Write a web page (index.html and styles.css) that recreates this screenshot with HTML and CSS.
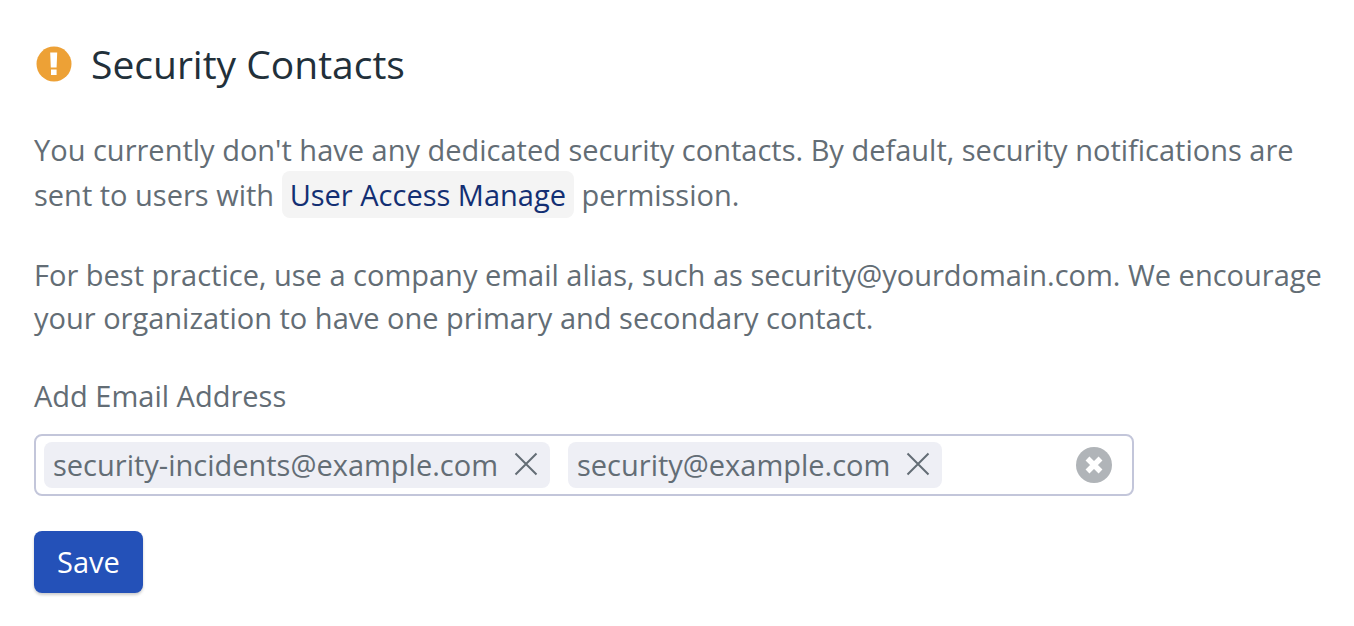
FILE: index.html
```html
<!DOCTYPE html>
<html lang="en">
<head>
<meta charset="utf-8">
<title>Security Contacts</title>
<link rel="stylesheet" href="styles.css">
</head>
<body>
<main class="panel">
  <header class="heading">
    <svg class="warning-icon" viewBox="0 0 36 36" aria-hidden="true">
      <circle cx="18" cy="18" r="17.5" fill="#eda136"/>
      <path d="M14.200 6.500h7l-.6 15h-5.800zM15 23.500h5.600v5.500H15z" fill="#fff"/>
    </svg>
    <h1 class="title">Security Contacts</h1>
  </header>
  <p class="text">You currently don't have any dedicated security contacts. By default, security notifications are sent to users with <span class="permission">User Access Manage</span> permission.</p>
  <p class="text">For best practice, use a company email alias, such as security@yourdomain.com. We encourage your organization to have one primary and secondary contact.</p>
  <form class="form">
    <label class="label" for="email">Add Email Address</label>
    <div class="field">
      <span class="tag">security-incidents@example.com
        <button class="remove" type="button" aria-label="Remove security-incidents@example.com"><svg class="cross" viewBox="0 0 24 24"><path d="M1.500 1.500l21 21M22.500 1.500l-21 21"/></svg></button>
      </span>
      <span class="tag">security@example.com
        <button class="remove" type="button" aria-label="Remove security@example.com"><svg class="cross" viewBox="0 0 24 24"><path d="M1.500 1.500l21 21M22.500 1.500l-21 21"/></svg></button>
      </span>
      <input class="input" id="email" type="email">
      <button class="clear" type="button" aria-label="Clear all"><svg class="clear-icon" viewBox="0 0 36 36"><circle cx="18" cy="18" r="18" fill="#b0b4b8"/><path d="M11.500 11.500l13 13M24.500 11.500l-13 13" stroke="#fff" stroke-width="5.500"/></svg></button>
    </div>
    <button class="save" type="submit">Save</button>
  </form>
</main>
</body>
</html>
```
FILE: styles.css
```css
* {
  box-sizing: border-box;
}

body {
  margin: 0;
  background: #fff;
  color: #636d75;
  font: 29px/43px "Open Sans", "Noto Sans", sans-serif;
}

.panel {
  padding: 36px 20px 32px 34px;
}

.heading {
  display: flex;
  align-items: center;
  gap: 19px;
  padding-left: 2px;
  margin-bottom: 36px;
}

.warning-icon {
  width: 36px;
  height: 36px;
}

.title {
  margin: 0;
  color: #22303a;
  font-size: 39px;
  font-weight: 400;
  line-height: 56px;
}

.text {
  margin: 0 0 35px;
}

.permission {
  display: inline-block;
  padding: 4px 8px;
  border-radius: 8px;
  background: #f4f4f4;
  color: #132f73;
  line-height: 39px;
}

.form {
  display: flex;
  flex-direction: column;
  align-items: flex-start;
}

.label {
  margin-bottom: 17px;
}

.field {
  display: flex;
  align-items: center;
  width: 100%;
  max-width: 1100px;
  margin-bottom: 35px;
  padding: 6px 20px 6px 8px;
  border: 2px solid #c3c6da;
  border-radius: 8px;
}

.tag {
  display: flex;
  align-items: center;
  gap: 16px;
  height: 46px;
  margin-right: 18px;
  padding: 0 12px 2px 9px;
  border-radius: 8px;
  background: #eeeff5;
  white-space: nowrap;
}

.remove,
.clear {
  display: flex;
  padding: 0;
  border: 0;
  background: none;
  cursor: pointer;
}

.cross {
  width: 24px;
  height: 24px;
  fill: none;
  stroke: #636d75;
  stroke-width: 2;
}

.input {
  flex: 1;
  min-width: 0;
  height: 40px;
  padding: 0;
  border: 0;
  outline: 0;
  background: none;
  color: inherit;
  font: inherit;
}

.clear-icon {
  width: 36px;
  height: 36px;
}

.save {
  padding: 9px 23px 10px;
  border: 0;
  border-radius: 8px;
  background: #2451b8;
  box-shadow: 0 2px 3px rgba(0, 0, 0, 0.2);
  color: #fff;
  font: inherit;
  cursor: pointer;
}
```
